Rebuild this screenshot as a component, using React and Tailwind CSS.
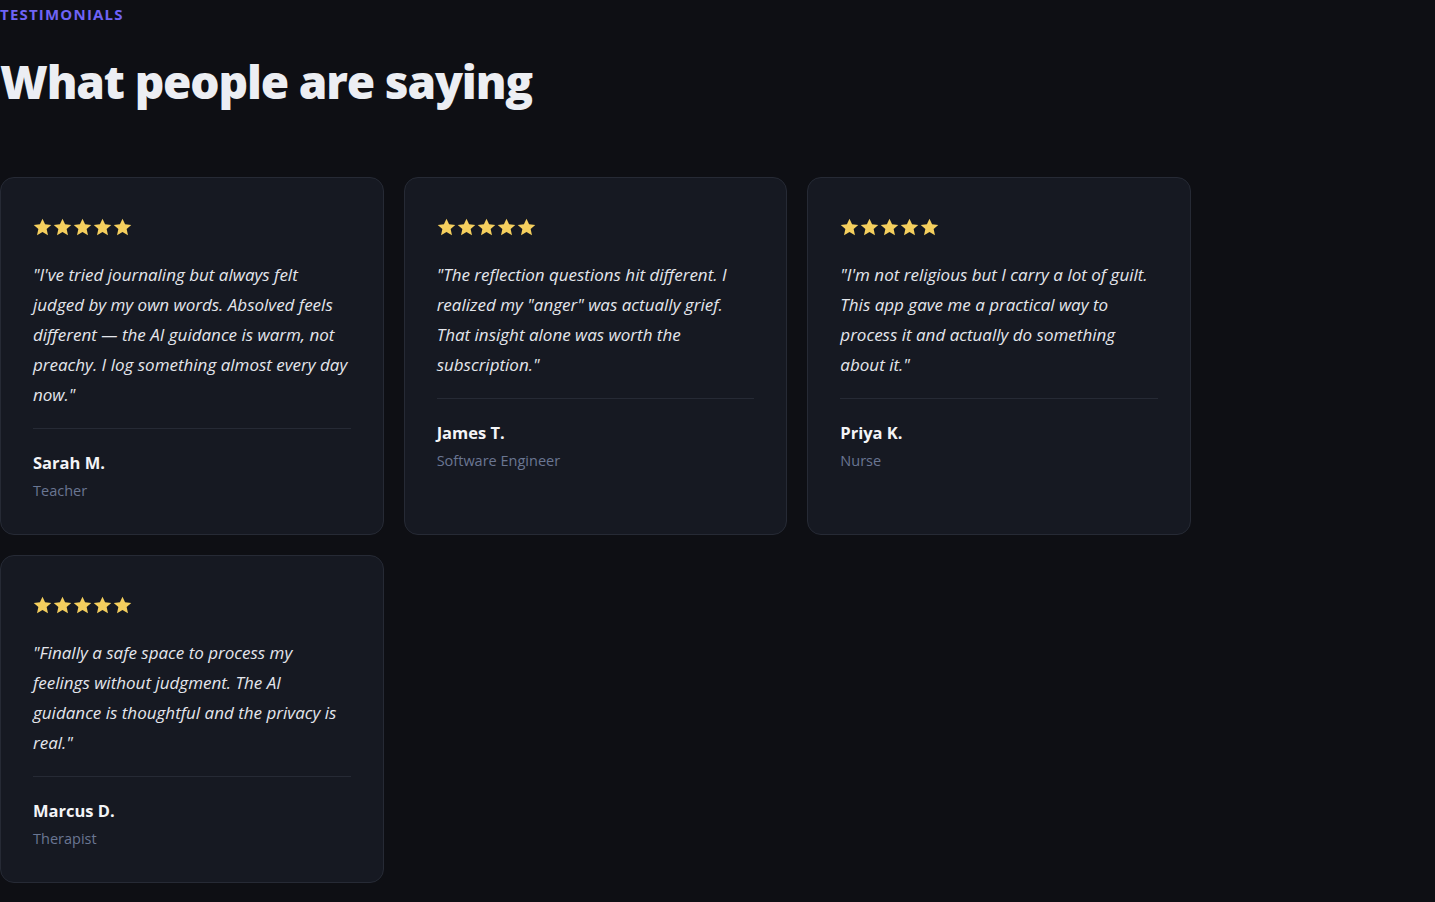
import React from "react";

const testimonials = [
  {
    quote:
      "\"I've tried journaling but always felt judged by my own words. Absolved feels different — the AI guidance is warm, not preachy. I log something almost every day now.\"",
    name: "Sarah M.",
    role: "Teacher",
  },
  {
    quote:
      "\"The reflection questions hit different. I realized my \"anger\" was actually grief. That insight alone was worth the subscription.\"",
    name: "James T.",
    role: "Software Engineer",
  },
  {
    quote:
      "\"I'm not religious but I carry a lot of guilt. This app gave me a practical way to process it and actually do something about it.\"",
    name: "Priya K.",
    role: "Nurse",
  },
  {
    quote:
      "\"Finally a safe space to process my feelings without judgment. The AI guidance is thoughtful and the privacy is real.\"",
    name: "Marcus D.",
    role: "Therapist",
  },
];

function Star() {
  return (
    <svg width="19" height="18" viewBox="0 0 24 23" className="shrink-0">
      <path
        d="M12 0.8l3.3 7.2 7.9.8-5.9 5.3 1.7 7.8L12 17.9l-7 4 1.7-7.8L.8 8.8l7.9-.8z"
        fill="#f5cf5e"
      />
    </svg>
  );
}

export default function App() {
  return (
    <div
      className="min-h-[902px] bg-[#0e0f14] text-[#eceef3]"
      style={{ fontFamily: '"Open Sans", "Noto Sans", sans-serif' }}
    >
      {/* Heading */}
      <p className="pt-[5px] text-[15px] leading-[18px] font-bold tracking-[0.08em] text-[#6f63f6]">
        TESTIMONIALS
      </p>
      <h1 className="mt-[30px] text-[46px] leading-[56px] font-extrabold tracking-[-0.025em] text-[#eceef3]">
        What people are saying
      </h1>

      {/* Cards */}
      <div className="mt-[68px] grid w-[1191px] grid-cols-3 gap-5">
        {testimonials.map((t) => (
          <div
            key={t.name}
            className="flex flex-col rounded-[14px] border border-[#262a35] bg-[#161922] p-8"
          >
            <div className="mb-4 flex h-[34px] items-center gap-[1px]">
              {[0, 1, 2, 3, 4].map((i) => (
                <Star key={i} />
              ))}
            </div>
            <p className="text-[17px] leading-[30px] italic text-[#e4e6ec]">{t.quote}</p>
            <div className="mt-[18px] border-t border-[#262a35] pt-[22px]">
              <p className="text-[16.5px] leading-[24px] font-bold text-[#f3f4f7]">{t.name}</p>
              <p className="mt-[5px] text-[14.5px] leading-[22px] text-[#6a7692]">{t.role}</p>
            </div>
          </div>
        ))}
      </div>
    </div>
  );
}
